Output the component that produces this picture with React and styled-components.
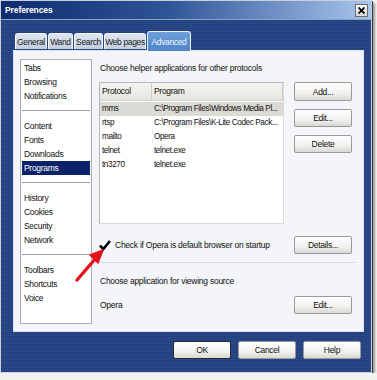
import React from 'react';
import styled, { createGlobalStyle } from 'styled-components';

const Global = createGlobalStyle`
  html, body {
    margin: 0;
    padding: 0;
    background: #f2f2f2;
  }
  body {
    font-family: "Liberation Sans", Arial, sans-serif;
    font-size: 8.5px;
    color: #111;
  }
`

const Window = styled.div`
  position: relative;
  width: 370px;
  height: 371px;
  border: 1px solid #c9d0dc;
  box-shadow: 1px 1px 0 #3a3a3a, 3px 3px 2px #9a9a9a;
  background: repeating-linear-gradient(180deg, #2a4a8a 0 1px, #22407e 1px 2px);
  display: flex;
  flex-direction: column;
`

const TitleBar = styled.div`
  height: 18px;
  display: flex;
  align-items: center;
  justify-content: space-between;
  padding: 0 3px 0 4px;
  background: linear-gradient(90deg, #0e2b6d 0%, #2f5597 45%, #a9c5ec 100%);
  border-bottom: 1px solid #8aa4cc;
`

const Title = styled.span`
  color: #fff;
  font-weight: bold;
  font-size: 8.5px;
  letter-spacing: -0.1px;
`

const CloseBox = styled.div`
  width: 11px;
  height: 11px;
  background: linear-gradient(#ffffff, #d8d8d8);
  border: 1px solid #6d6d6d;
  display: flex;
  align-items: center;
  justify-content: center;
`

const Body = styled.div`
  flex: 1;
  display: flex;
  flex-direction: column;
  padding: 10px 7px 0 12px;
`

const TabRow = styled.div`
  display: flex;
  align-items: flex-end;
  gap: 1px;
  padding-left: 2px;
  height: 20px;
  position: relative;
  z-index: 1;
`

const Tab = styled.div`
  width: ${p => p.$w}px;
  height: ${p => (p.$active ? 20 : 16)}px;
  box-sizing: border-box;
  display: flex;
  align-items: center;
  justify-content: center;
  white-space: nowrap;
  border: 1px solid ${p => (p.$active ? '#e8f0fa' : '#f4f6fa')};
  border-bottom: none;
  border-radius: 3px 3px 0 0;
  background: ${p => (p.$active ? 'linear-gradient(#6f9fd8, #4f86c8)' : 'linear-gradient(#dde4ee, #c3cedd)')};
  color: ${p => (p.$active ? '#eef4fb' : '#1a1a1a')};
  letter-spacing: -0.35px;
  margin-bottom: ${p => (p.$active ? -1 : 1)}px;
`

const Panel = styled.div`
  height: 282px;
  box-sizing: border-box;
  background: #f3f5f8;
  border: 1px solid #dfe4ec;
  display: flex;
  gap: 7px;
  padding: 8px 11px 7px 6px;
`

const NavList = styled.div`
  width: 72px;
  box-sizing: border-box;
  background: #fff;
  border: 1px solid #a9adb3;
  padding: 1px 0 0 1px;
  display: flex;
  flex-direction: column;
`

const NavItem = styled.div`
  height: 14px;
  line-height: 14px;
  padding-left: 2px;
  margin-right: 1px;
  letter-spacing: -0.3px;
  background: ${p => (p.$selected ? '#0b2168' : 'transparent')};
  color: ${p => (p.$selected ? '#fff' : '#111')};
`

const NavSep = styled.div`
  height: 1px;
  background: #9fa3a8;
  margin: 7px 1px 8px 0;
`

const Content = styled.div`
  flex: 1;
  display: flex;
  flex-direction: column;
  padding-top: 2px;
`

const Label = styled.div`
  height: 14px;
  line-height: 14px;
  white-space: nowrap;
  letter-spacing: -0.25px;
  margin-left: ${p => p.$indent || 0}px;
`

const Row = styled.div`
  display: flex;
  align-items: ${p => p.$align || 'center'};
  justify-content: space-between;
  margin-top: ${p => p.$mt || 0}px;
`

const Table = styled.div`
  width: 185px;
  height: 142px;
  box-sizing: border-box;
  background: #fff;
  border: 1px solid #b3b6ba;
  border-right-color: #d9dbde;
  border-bottom-color: #d9dbde;
`

const TableHead = styled.div`
  display: grid;
  grid-template-columns: 52px 1fr;
  height: 17px;
  background: linear-gradient(#f6f5f2, #e6e4de);
  border-bottom: 1px solid #d0cec6;
  margin-bottom: 1px;
`

const HeadCell = styled.div`
  line-height: 17px;
  padding-left: 2px;
  letter-spacing: -0.3px;
  border-right: 1px solid #cfccc4;
`

const TableRow = styled.div`
  display: grid;
  grid-template-columns: 52px 1fr;
  height: 14px;
  line-height: 14px;
  background: ${p => (p.$hl ? '#dcdad4' : 'transparent')};
`

const Cell = styled.div`
  padding-left: 2px;
  white-space: nowrap;
  font-size: 8.2px;
  letter-spacing: -0.4px;
`

const ButtonCol = styled.div`
  display: flex;
  flex-direction: column;
  gap: 8px;
`

const Button = styled.button`
  width: ${p => p.$w || 58}px;
  height: ${p => p.$h || 18}px;
  box-sizing: border-box;
  font-family: "Liberation Sans", Arial, sans-serif;
  font-size: 8.5px;
  letter-spacing: -0.3px;
  color: #111;
  background: linear-gradient(#ffffff 0%, #f1f1ef 60%, #d9d8d3 100%);
  border: 1px solid ${p => (p.$default ? '#2a2a2a' : '#9a9a98')};
  border-radius: 2px;
  padding: 0;
`

const CheckRow = styled.div`
  display: flex;
  align-items: center;
  gap: 4px;
  svg {
    flex-shrink: 0;
  }
`

const Divider = styled.div`
  height: 1px;
  background: #d7dbe1;
  margin: ${p => p.$m || '0'};
`

const Footer = styled.div`
  display: flex;
  justify-content: flex-end;
  gap: 7px;
  padding: 9px 3px 0 0;
`

const Arrow = styled.svg`
  position: absolute;
  left: 70px;
  top: 245px;
  overflow: visible;
`

const navGroups = [
  ['Tabs', 'Browsing', 'Notifications'],
  ['Content', 'Fonts', 'Downloads', 'Programs'],
  ['History', 'Cookies', 'Security', 'Network'],
  ['Toolbars', 'Shortcuts', 'Voice'],
]

const protocols = [
  ['mms', 'C:\\Program Files\\Windows Media Pl...'],
  ['rtsp', 'C:\\Program Files\\K-Lite Codec Pack...'],
  ['mailto', 'Opera'],
  ['telnet', 'telnet.exe'],
  ['tn3270', 'telnet.exe'],
]

const tabs = [
  ['General', 32],
  ['Wand', 25],
  ['Search', 29],
  ['Web pages', 42],
  ['Advanced', 44],
]

export default function App() {
  return (
    <>
      <Global />
      <Window>
        <TitleBar>
          <Title>Preferences</Title>
          <CloseBox>
            <svg width="7" height="7" viewBox="0 0 7 7">
              <path d="M0.5 0.5 L6.5 6.5 M6.5 0.5 L0.5 6.5" stroke="#000" strokeWidth="1.8" />
            </svg>
          </CloseBox>
        </TitleBar>
        <Body>
          <TabRow>
            {tabs.map(([t, w]) => (
              <Tab key={t} $w={w} $active={t === 'Advanced'}>{t}</Tab>
            ))}
          </TabRow>
          <Panel>
            <NavList>
              {navGroups.map((g, i) => (
                <React.Fragment key={i}>
                  {i > 0 && <NavSep />}
                  {g.map(item => (
                    <NavItem key={item} $selected={item === 'Programs'}>{item}</NavItem>
                  ))}
                </React.Fragment>
              ))}
            </NavList>
            <Content>
              <Label $indent={1}>Choose helper applications for other protocols</Label>
              <Row $align="flex-start" $mt={7}>
                <Table>
                  <TableHead>
                    <HeadCell>Protocol</HeadCell>
                    <HeadCell>Program</HeadCell>
                  </TableHead>
                  {protocols.map(([p, prog]) => (
                    <TableRow key={p} $hl={p === 'mms'}>
                      <Cell>{p}</Cell>
                      <Cell>{prog}</Cell>
                    </TableRow>
                  ))}
                </Table>
                <ButtonCol>
                  <Button $h={19}>Add...</Button>
                  <Button>Edit...</Button>
                  <Button>Delete</Button>
                </ButtonCol>
              </Row>
              <Row $mt={12}>
                <CheckRow>
                  <svg width="12" height="11" viewBox="0 0 12 11">
                    <path d="M1 5.5 L4.2 9.2 L11 1" fill="none" stroke="#000" strokeWidth="2.6" />
                  </svg>
                  <Label>Check if Opera is default browser on startup</Label>
                </CheckRow>
                <Button>Details...</Button>
              </Row>
              <Divider $m="8px -4px 11px -2px" />
              <Label $indent={1}>Choose application for viewing source</Label>
              <Row $mt={8}>
                <Label $indent={1}>Opera</Label>
                <Button>Edit...</Button>
              </Row>
            </Content>
          </Panel>
          <Footer>
            <Button $default>OK</Button>
            <Button>Cancel</Button>
            <Button>Help</Button>
          </Footer>
        </Body>
        <Arrow width="34" height="36" viewBox="0 0 34 36">
          <path d="M6 34 L25 12" stroke="#e3141c" strokeWidth="3.4" strokeLinecap="round" />
          <path d="M32 4 L19 9 L27 17 Z" fill="#e3141c" stroke="#e3141c" strokeWidth="1.5" strokeLinejoin="round" />
        </Arrow>
      </Window>
    </>
  );
}
